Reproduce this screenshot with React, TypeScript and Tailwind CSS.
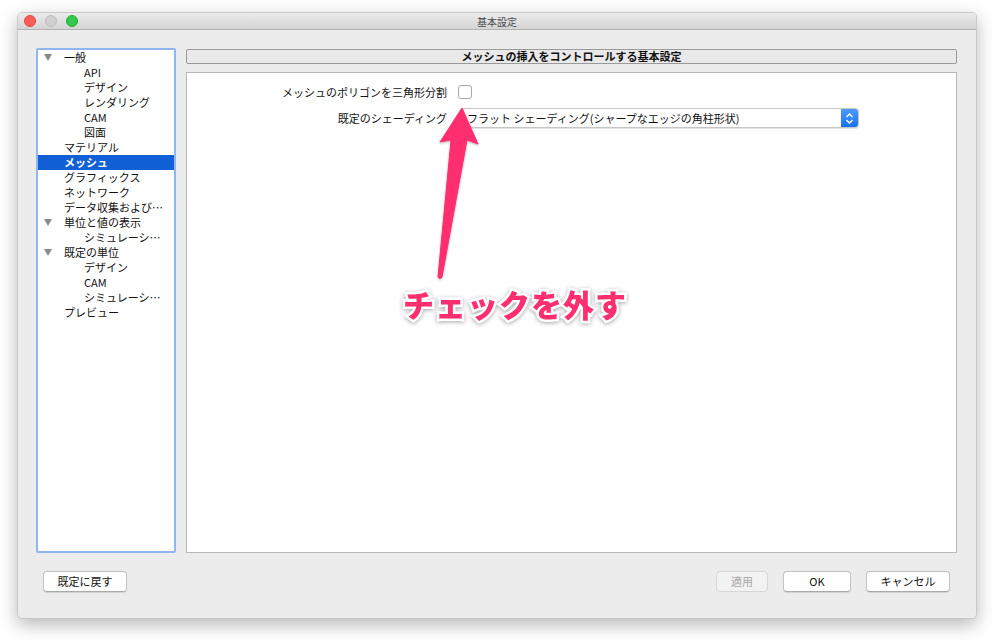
import React from 'react';

type TreeItem = { label: string; level: 0 | 1; expanded?: boolean; selected?: boolean };

const treeItems: TreeItem[] = [
  { label: '一般', level: 0, expanded: true },
  { label: 'API', level: 1 },
  { label: 'デザイン', level: 1 },
  { label: 'レンダリング', level: 1 },
  { label: 'CAM', level: 1 },
  { label: '図面', level: 1 },
  { label: 'マテリアル', level: 0 },
  { label: 'メッシュ', level: 0, selected: true },
  { label: 'グラフィックス', level: 0 },
  { label: 'ネットワーク', level: 0 },
  { label: 'データ収集および…', level: 0 },
  { label: '単位と値の表示', level: 0, expanded: true },
  { label: 'シミュレーシ…', level: 1 },
  { label: '既定の単位', level: 0, expanded: true },
  { label: 'デザイン', level: 1 },
  { label: 'CAM', level: 1 },
  { label: 'シミュレーシ…', level: 1 },
  { label: 'プレビュー', level: 0 },
];

const font = "font-['Hiragino_Sans','Noto_Sans_CJK_JP',sans-serif]";

const TrafficLights = () => (
  <div className="flex items-center gap-[9px] pl-[6px]">
    <span className="w-[12px] h-[12px] rounded-full bg-[#fc5b57] border border-[#e2463f]" />
    <span className="w-[12px] h-[12px] rounded-full bg-[#d0d0d0] border border-[#bdbdbd]" />
    <span className="w-[12px] h-[12px] rounded-full bg-[#34c84a] border border-[#24a936]" />
  </div>
);

const Sidebar = () => (
  <div className="w-[140px] h-[505px] bg-white border-2 border-[#8db7ef] rounded-[2px] overflow-hidden">
    {treeItems.map((item, i) => (
      <div
        key={i}
        className={`relative h-[15px] flex items-center text-[11px] leading-none ${
          item.selected ? 'bg-[#1160d6] text-white font-bold' : 'text-[#111]'
        }`}
      >
        {item.expanded && (
          <span className="absolute left-[6px] top-[4px] w-0 h-0 border-l-[4px] border-r-[4px] border-t-[7px] border-l-transparent border-r-transparent border-t-[#8a8a8a]" />
        )}
        <span className={item.level === 0 ? 'pl-[26px]' : 'pl-[46px]'}>{item.label}</span>
      </div>
    ))}
  </div>
);

const Button = ({ label, width, disabled }: { label: string; width: string; disabled?: boolean }) => (
  <button
    className={`${width} h-[21px] rounded-[4px] text-[11px] leading-none flex items-center justify-center ${
      disabled
        ? 'bg-[#f2f2f2] border border-[#d6d6d6] text-[#a6a6a6]'
        : 'bg-white border border-[#c4c4c4] border-b-[#aaaaaa] text-[#111] shadow-[0_0.5px_1px_rgba(0,0,0,0.1)]'
    }`}
  >
    {label}
  </button>
);

export default function App() {
  return (
    <div className={`relative w-[994px] h-[640px] bg-white overflow-hidden pt-[12px] pl-[17px] ${font}`}>
      {/* window */}
      <div className="w-[960px] h-[607px] rounded-[5px] overflow-hidden bg-[#ececec] border border-[#c9c9c9] shadow-[0_6px_18px_rgba(0,0,0,0.28)] flex flex-col">
        {/* title bar */}
        <div className="relative h-[17px] shrink-0 flex items-center bg-gradient-to-b from-[#ebebeb] to-[#d4d4d4] border-b border-[#b3b3b3]">
          <TrafficLights />
          <div className="absolute inset-0 flex items-center justify-center text-[10px] text-[#4a4a4a]">基本設定</div>
        </div>

        {/* body */}
        <div className="flex-1 flex flex-col pt-[18px] pl-[18px] pr-[19px]">
          <div className="flex gap-[10px]">
            <Sidebar />
            <div className="flex-1 flex flex-col pt-[1px]">
              <div className="h-[15px] bg-[#e9e9e9] border border-[#9a9a9a] rounded-[2px] flex items-center justify-center text-[11px] font-bold text-[#111] leading-none">
                メッシュの挿入をコントロールする基本設定
              </div>
              <div className="mt-[8px] h-[481px] bg-white border border-[#b8b8b8] flex flex-col pt-[12px] gap-[9px] text-[11px] text-[#111]">
                <div className="flex items-center h-[14px]">
                  <div className="w-[260px] text-right leading-none">メッシュのポリゴンを三角形分割</div>
                  <div className="ml-[11px] w-[14px] h-[14px] rounded-[3px] border border-[#a9a9a9] bg-white shadow-[inset_0_1px_1px_rgba(0,0,0,0.05)]" />
                </div>
                <div className="flex items-center h-[20px]">
                  <div className="w-[260px] text-right leading-none">既定のシェーディング</div>
                  <div className="ml-[14px] w-[398px] h-[20px] flex rounded-[4px] border border-[#c6c6c6] bg-white shadow-[0_0.5px_1px_rgba(0,0,0,0.12)] overflow-hidden">
                    <div className="flex-1 flex items-center pl-[5px] leading-none">フラット シェーディング(シャープなエッジの角柱形状)</div>
                    <div className="w-[17px] h-full bg-gradient-to-b from-[#4d9bff] to-[#1670f5] flex items-center justify-center">
                      <svg width="9" height="13" viewBox="0 0 9 13" fill="none" stroke="white" strokeWidth="1.4">
                        <path d="M1.5 5 L4.5 2 L7.5 5" />
                        <path d="M1.5 8 L4.5 11 L7.5 8" />
                      </svg>
                    </div>
                  </div>
                </div>
              </div>
            </div>
          </div>

          {/* buttons */}
          <div className="mt-[18px] flex items-center pl-[7px] pr-[7px]">
            <Button label="既定に戻す" width="w-[84px]" />
            <div className="flex-1" />
            <div className="flex gap-[15px]">
              <Button label="適用" width="w-[52px]" disabled />
              <Button label="OK" width="w-[68px]" />
              <Button label="キャンセル" width="w-[84px]" />
            </div>
          </div>
        </div>
      </div>

      {/* annotation overlay */}
      <svg className="absolute inset-0 pointer-events-none" width="994" height="640">
        <defs>
          <filter id="sh" x="-20%" y="-20%" width="140%" height="140%">
            <feDropShadow dx="0" dy="1" stdDeviation="1.2" floodColor="#000" floodOpacity="0.3" />
          </filter>
        </defs>
        <path
          d="M462 108 L478 144 L467 140 L442 277 Q440 280 438 277 L451 140 L440 142 Z"
          fill="#ff2e6e"
          stroke="#ff2e6e"
          strokeLinejoin="round"
          strokeWidth="1"
          filter="url(#sh)"
        />
      </svg>
      <div className="absolute left-[403px] top-[288px] text-[31px] tracking-[1px] leading-none font-black text-[#ff2e6e] [paint-order:stroke_fill] [-webkit-text-stroke:5px_white] [filter:drop-shadow(0_1px_2px_rgba(0,0,0,0.35))] pointer-events-none">
        チェックを外す
      </div>
    </div>
  );
}
